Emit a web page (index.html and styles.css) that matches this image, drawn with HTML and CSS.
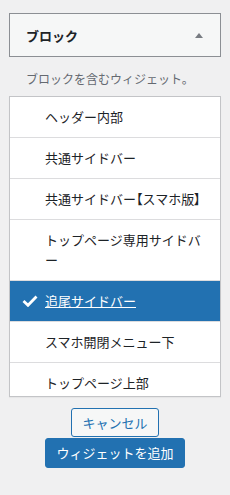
FILE: index.html
```
<!DOCTYPE html>
<html lang="ja">

<head>
    <meta charset="UTF-8">
    <meta name="viewport" content="width=device-width, initial-scale=1.0">
    <title>ウィジェット</title>
    <link rel="stylesheet" href="styles.css">
</head>

<body>
    <div class="chooser">
        <div class="widgetTop">
            <h3>ブロック</h3>
            <span class="arrow"></span>
        </div>
        <p class="desc">ブロックを含むウィジェット。</p>
        <ul class="sidebars">
            <li>ヘッダー内部</li>
            <li>共通サイドバー</li>
            <li>共通サイドバー<span class="brk">【</span>スマホ版<span class="brk">】</span></li>
            <li>トップページ専用サイドバー</li>
            <li class="selected">
                <svg class="check" viewBox="0 0 16 12" width="16" height="12">
                    <polyline points="1.5,6 6,10.3 14.5,1.5" fill="none" stroke="#fff" stroke-width="2.8"/>
                </svg>
                <a href="#">追尾サイドバー</a>
            </li>
            <li>スマホ開閉メニュー下</li>
            <li>トップページ上部</li>
        </ul>
        <div class="actions">
            <a href="#" class="btn">キャンセル</a>
            <a href="#" class="btn primary">ウィジェットを追加</a>
        </div>
    </div>
</body>

</html>
```

FILE: styles.css
```
body {
    margin: 0;
    background: #f0f0f1;
    font-family: "Noto Sans CJK JP", "Noto Sans", sans-serif;
    color: #1d2327;
}

.chooser {
    padding: 13px 9px;
}

.widgetTop {
    display: flex;
    align-items: center;
    justify-content: space-between;
    height: 42px;
    padding: 0 17px 0 16px;
    background: #f6f7f7;
    border: 1px solid #8c8f94;
}

.widgetTop h3 {
    margin: 0;
    font-size: 13px;
    font-weight: bold;
}

.widgetTop .arrow {
    width: 0;
    height: 0;
    border-left: 4px solid transparent;
    border-right: 4px solid transparent;
    border-bottom: 5px solid #787c82;
}

.desc {
    margin: 13px 0 8px 17px;
    font-size: 12px;
    line-height: 18px;
    color: #646970;
}

.sidebars {
    list-style: none;
    margin: 0;
    padding: 0;
    height: 299px;
    overflow: hidden;
    background: #fff;
    border: 1px solid #c3c4c7;
    box-shadow: 0 1px 1px rgba(0, 0, 0, .04);
}

.sidebars li {
    position: relative;
    padding: 10px 15px 10px 35px;
    font-size: 13px;
    line-height: 20px;
    border-bottom: 1px solid #dcdcde;
}

.sidebars .brk {
    font-feature-settings: "palt";
}

.sidebars li.selected {
    background: #2271b1;
    color: #fff;
}

.sidebars li.selected a {
    color: #fff;
}

.sidebars .check {
    position: absolute;
    left: 12px;
    top: 14px;
}

.actions {
    display: flex;
    flex-direction: column;
    align-items: center;
    gap: 1px;
    margin-top: 11px;
}

.btn {
    display: inline-block;
    padding: 0 10px;
    font-size: 13px;
    line-height: 27px;
    color: #2271b1;
    background: #f6f7f7;
    border: 1px solid #2271b1;
    border-radius: 3px;
    text-decoration: none;
}

.btn.primary {
    line-height: 28px;
    color: #fff;
    background: #2271b1;
}
```
